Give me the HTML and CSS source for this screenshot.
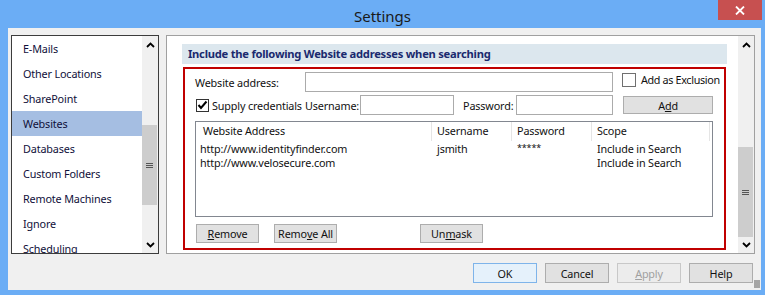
FILE: index.html
```html
<!DOCTYPE html>
<html lang="en">
<head>
  <meta charset="UTF-8">
  <title>Settings</title>
  <link rel="stylesheet" href="styles.css">
</head>
<body>
  <div class="window">
    <div class="title-bar">
      <span class="title">Settings</span>
      <div class="close-btn">
        <svg width="10" height="9" viewBox="0 0 10 9"><path d="M1 0.5 L9 8.5 M9 0.5 L1 8.5" stroke="#fff" stroke-width="1.8"/></svg>
      </div>
    </div>

    <div class="client">
      <div class="main-row">
        <div class="nav-list">
          <ul class="nav-items">
            <li>E-Mails</li>
            <li>Other Locations</li>
            <li>SharePoint</li>
            <li class="selected">Websites</li>
            <li>Databases</li>
            <li>Custom Folders</li>
            <li>Remote Machines</li>
            <li>Ignore</li>
            <li>Scheduling</li>
          </ul>
          <div class="scrollbar nav-scroll">
            <div class="arrow"><svg width="9" height="6" viewBox="0 0 9 6"><path d="M1 5 L4.5 1.5 L8 5" fill="none" stroke="#000" stroke-width="1.8"/></svg></div>
            <div class="track">
              <div class="thumb"><span class="grip"></span></div>
            </div>
            <div class="arrow"><svg width="9" height="6" viewBox="0 0 9 6"><path d="M1 1 L4.5 4.5 L8 1" fill="none" stroke="#000" stroke-width="1.8"/></svg></div>
          </div>
        </div>

        <div class="panel">
          <div class="panel-body">
            <div class="section-head">Include the following Website addresses when searching</div>
            <div class="section-box">
              <div class="form-row">
                <span class="lbl lbl-address">Website address:</span>
                <span class="textbox tb-address"></span>
                <label class="check check-excl"><span class="box"></span>Add as Exclusion</label>
              </div>
              <div class="form-row row-creds">
                <label class="check check-creds">
                  <span class="box checked"><svg width="11" height="10" viewBox="0 0 11 10"><path d="M1.5 5 L4 8 L9.5 1.5" fill="none" stroke="#000" stroke-width="2"/></svg></span>Supply credentials
                </label>
                <span class="lbl lbl-user">Username:</span>
                <span class="textbox tb-user"></span>
                <span class="lbl lbl-pass">Password:</span>
                <span class="textbox tb-pass"></span>
                <span class="btn btn-add">A<u>d</u>d</span>
              </div>

              <div class="list-view">
                <div class="lv-row lv-head">
                  <span class="c1">Website Address</span>
                  <span class="c2">Username</span>
                  <span class="c3">Password</span>
                  <span class="c4">Scope</span>
                  <span class="c5"></span>
                </div>
                <div class="lv-row lv-item first">
                  <span class="c1">http://www.identityfinder.com</span>
                  <span class="c2">jsmith</span>
                  <span class="c3 mask">*****</span>
                  <span class="c4">Include in Search</span>
                </div>
                <div class="lv-row lv-item">
                  <span class="c1">http://www.velosecure.com</span>
                  <span class="c2"></span>
                  <span class="c3"></span>
                  <span class="c4">Include in Search</span>
                </div>
              </div>

              <div class="list-actions">
                <span class="btn btn-remove"><u>R</u>emove</span>
                <span class="btn btn-remove-all">Remo<u>v</u>e All</span>
                <span class="btn btn-unmask">Un<u>m</u>ask</span>
              </div>
            </div>
          </div>
          <div class="scrollbar panel-scroll">
            <div class="arrow"><svg width="9" height="6" viewBox="0 0 9 6"><path d="M1 5 L4.5 1.5 L8 5" fill="none" stroke="#000" stroke-width="1.8"/></svg></div>
            <div class="track">
              <div class="thumb"><span class="grip"></span></div>
            </div>
            <div class="arrow"><svg width="9" height="6" viewBox="0 0 9 6"><path d="M1 1 L4.5 4.5 L8 1" fill="none" stroke="#000" stroke-width="1.8"/></svg></div>
          </div>
        </div>
      </div>

      <div class="footer">
        <span class="btn dlg-btn default">OK</span>
        <span class="btn dlg-btn">Cancel</span>
        <span class="btn dlg-btn disabled"><u>A</u>pply</span>
        <span class="btn dlg-btn">Help</span>
        <span class="size-grip"></span>
      </div>
    </div>
  </div>
</body>
</html>
```

FILE: styles.css
```css
* {
  box-sizing: border-box;
  margin: 0;
  padding: 0;
}

body {
  width: 765px;
  height: 295px;
  overflow: hidden;
  font-family: 'Noto Sans', 'Open Sans', sans-serif;
  font-size: 10.8px;
  letter-spacing: -0.15px;
  color: #111;
}

.window {
  width: 765px;
  height: 295px;
  display: flex;
  flex-direction: column;
  background: #6badf5;
  padding: 0 4px 5px 8px;
}

.title-bar {
  height: 28px;
  margin-left: -8px;
  margin-right: -4px;
  position: relative;
  display: flex;
  align-items: center;
  justify-content: center;
}

.title {
  font-size: 15px;
  letter-spacing: 0;
  color: #1a1a1a;
  margin-top: 3px;
}

.close-btn {
  position: absolute;
  top: 0;
  right: 3px;
  width: 44px;
  height: 20px;
  background: #c75050;
  display: flex;
  align-items: center;
  justify-content: center;
}

.client {
  flex: 1;
  background: #f0f0f0;
  padding: 7px 0 0 3px;
  display: flex;
  flex-direction: column;
}

.main-row {
  display: flex;
  height: 219px;
}

/* left navigation list */
.nav-list {
  width: 148px;
  border: 1px solid #3c3c3c;
  background: #fff;
  display: flex;
  overflow: hidden;
}

.nav-items {
  list-style: none;
  flex: 1;
}

.nav-items li {
  height: 25px;
  line-height: 25px;
  padding-left: 11px;
  white-space: nowrap;
  color: #10103a;
}

.nav-items li.selected {
  background: #a5bee2;
}

.scrollbar {
  width: 16px;
  background: #f0f0f0;
  display: flex;
  flex-direction: column;
}

.scrollbar .arrow {
  height: 17px;
  display: flex;
  align-items: center;
  justify-content: center;
}

.scrollbar .track {
  flex: 1;
  position: relative;
}

.scrollbar .thumb {
  position: absolute;
  left: 0;
  right: 1px;
  background: #cdcdcd;
  display: flex;
  align-items: center;
  justify-content: center;
}

.grip {
  width: 7px;
  height: 5px;
  border-top: 1px solid #555;
  border-bottom: 1px solid #555;
  position: relative;
}

.grip::after {
  content: '';
  position: absolute;
  left: 0;
  right: 0;
  top: 1px;
  border-top: 1px solid #555;
}

.nav-scroll .thumb {
  top: 72px;
  height: 80px;
}

/* right panel */
.panel {
  width: 589px;
  margin-left: 7px;
  border: 1px solid #a0a0a0;
  background: #fff;
  display: flex;
}

.panel-body {
  flex: 1;
  padding: 8px 0 0 15px;
}

.panel-scroll .thumb {
  top: 94px;
  height: 90px;
}

.section-head {
  width: 545px;
  height: 20px;
  background: #dce7ee;
  color: #1a2a6e;
  font-weight: bold;
  font-size: 11.2px;
  letter-spacing: -0.25px;
  line-height: 20px;
  padding-left: 6px;
  white-space: nowrap;
  overflow: hidden;
}

.section-box {
  width: 543px;
  height: 183px;
  margin: 3px 0 0 1px;
  border: 2px solid #c00000;
  padding: 3px 0 0 10px;
}

.form-row {
  display: flex;
  align-items: center;
  height: 20px;
}

.row-creds {
  margin-top: 3px;
}

.lbl {
  white-space: nowrap;
  flex-shrink: 0;
}

.lbl-address {
  width: 110px;
}

.textbox {
  height: 20px;
  background: #fff;
  border: 1px solid #ababab;
  flex-shrink: 0;
}

.tb-address {
  width: 308px;
}

.check {
  display: flex;
  align-items: center;
  white-space: nowrap;
  flex-shrink: 0;
}

.check .box {
  width: 14px;
  height: 14px;
  border: 1px solid #707070;
  background: #fff;
  margin-right: 5px;
  display: flex;
  align-items: center;
  justify-content: center;
}

.check-excl {
  margin-left: 9px;
  margin-top: -5px;
  letter-spacing: -0.35px;
}

.check-creds {
  width: 109px;
  margin-left: 1px;
}

.check-creds .box {
  width: 13px;
  height: 13px;
  margin-right: 3px;
  border-color: #333;
}

.lbl-user {
  width: 55px;
}

.tb-user {
  width: 94px;
}

.lbl-pass {
  width: 53px;
  margin-left: 9px;
}

.tb-pass {
  width: 97px;
}

.btn {
  display: flex;
  align-items: center;
  justify-content: center;
  background: #e1e1e1;
  border: 1px solid #adadad;
  white-space: nowrap;
  color: #111;
  flex-shrink: 0;
}

.btn-add {
  width: 90px;
  height: 18px;
  margin-left: 10px;
}

/* list view */
.list-view {
  width: 518px;
  height: 96px;
  margin-top: 6px;
  border: 1px solid #828790;
  background: #fff;
}

.lv-row {
  display: grid;
  grid-template-columns: 236px 80px 80px 118px 1fr;
}

.lv-row span {
  white-space: nowrap;
  overflow: hidden;
}

.lv-head {
  height: 19px;
  line-height: 18px;
}

.lv-head span {
  border-right: 1px solid #e5e5e5;
  padding-left: 5px;
}

.lv-head .c1 {
  padding-left: 7px;
}

.lv-head .c5 {
  border-right: none;
}

.lv-item {
  height: 14px;
  line-height: 14px;
}

.lv-item.first {
  margin-top: 1px;
}

.lv-item span {
  padding-left: 5px;
}

.lv-item .c1 {
  padding-left: 4px;
}

.mask {
  font-size: 9px;
  line-height: 11px;
}

.list-actions {
  display: flex;
  margin-top: 7px;
  margin-left: 1px;
}

.list-actions .btn {
  height: 19px;
  width: 63px;
}

.btn-remove-all {
  margin-left: 15px;
}

.btn-unmask {
  margin-left: 83px;
}

/* dialog buttons */
.footer {
  display: flex;
  justify-content: flex-end;
  padding-right: 8px;
  margin-top: 9px;
  position: relative;
}

.dlg-btn {
  width: 64px;
  height: 20px;
  margin-left: 8px;
}

.dlg-btn.default {
  background: #e5f1fb;
  border-color: #7eb4ea;
}

.dlg-btn.disabled {
  color: #a0a0a0;
  background: #ececec;
  border-color: #c8c8c8;
}

.size-grip {
  position: absolute;
  right: 1px;
  top: 17px;
  width: 6px;
  height: 8px;
  background-image: radial-gradient(circle, #a0a0a0 0.7px, transparent 0.8px);
  background-size: 2px 2px;
}
```
